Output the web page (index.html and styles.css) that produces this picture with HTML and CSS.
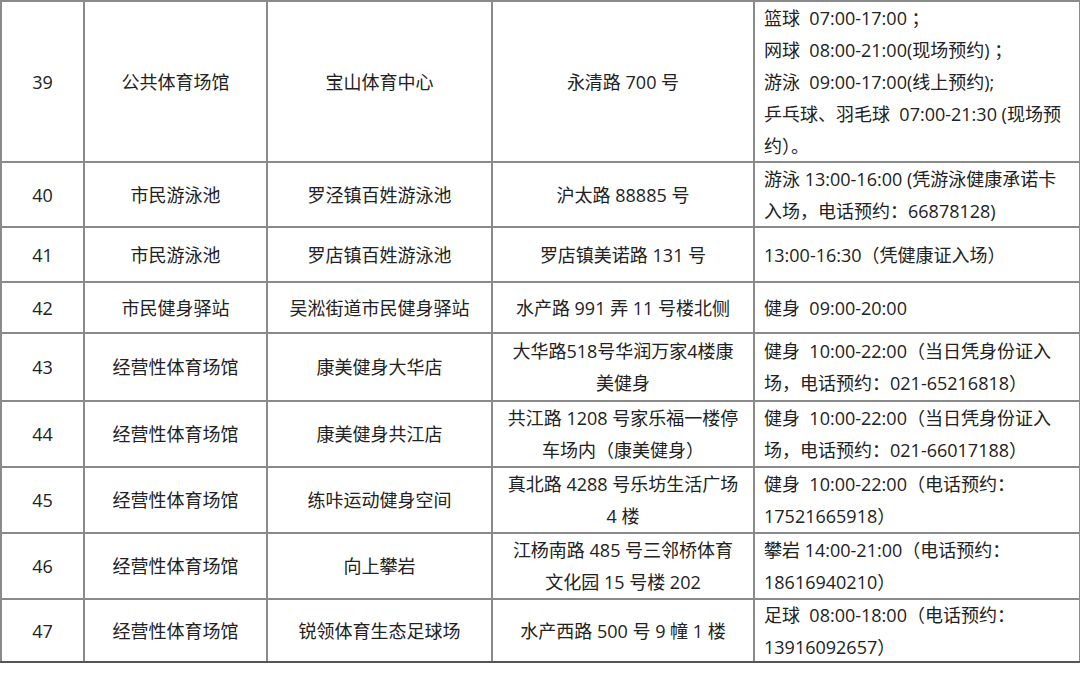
FILE: index.html
```html
<!DOCTYPE html>
<html lang="zh-CN">
<head>
<meta charset="utf-8">
<title>场馆开放信息</title>
<link rel="stylesheet" href="styles.css">
</head>
<body>
<table class="venues">
  <colgroup>
    <col class="c-no">
    <col class="c-type">
    <col class="c-name">
    <col class="c-addr">
    <col class="c-time">
  </colgroup>
  <tbody>
    <tr class="r-162">
      <td class="num">39</td>
      <td>公共体育场馆</td>
      <td>宝山体育中心</td>
      <td>永清路 700 号</td>
      <td class="time"><div class="fit">篮球&nbsp; 07:00-17:00 ；<br>网球&nbsp; 08:00-21:00(现场预约) ；<br>游泳&nbsp; 09:00-17:00(线上预约);<br>乒乓球、羽毛球&nbsp; 07:00-21:30 (现场预<br>约）。</div></td>
    </tr>
    <tr class="r-65">
      <td class="num">40</td>
      <td>市民游泳池</td>
      <td>罗泾镇百姓游泳池</td>
      <td>沪太路 88885 号</td>
      <td class="time"><div class="fit">游泳 13:00-16:00 (凭游泳健康承诺卡<br>入场，电话预约：66878128)</div></td>
    </tr>
    <tr class="r-55">
      <td class="num">41</td>
      <td>市民游泳池</td>
      <td>罗店镇百姓游泳池</td>
      <td>罗店镇美诺路 131 号</td>
      <td class="time">13:00-16:30（凭健康证入场）</td>
    </tr>
    <tr class="r-51">
      <td class="num">42</td>
      <td>市民健身驿站</td>
      <td>吴淞街道市民健身驿站</td>
      <td>水产路 991 弄 11 号楼北侧</td>
      <td class="time">健身&nbsp; 09:00-20:00</td>
    </tr>
    <tr class="r-68">
      <td class="num">43</td>
      <td>经营性体育场馆</td>
      <td>康美健身大华店</td>
      <td><div class="fit">大华路518号华润万家4楼康<br>美健身</div></td>
      <td class="time"><div class="fit">健身&nbsp; 10:00-22:00（当日凭身份证入<br>场，电话预约：021-65216818）</div></td>
    </tr>
    <tr class="r-66">
      <td class="num">44</td>
      <td>经营性体育场馆</td>
      <td>康美健身共江店</td>
      <td><div class="fit">共江路 1208 号家乐福一楼停<br>车场内（康美健身）</div></td>
      <td class="time"><div class="fit">健身&nbsp; 10:00-22:00（当日凭身份证入<br>场，电话预约：021-66017188）</div></td>
    </tr>
    <tr class="r-66">
      <td class="num">45</td>
      <td>经营性体育场馆</td>
      <td>练咔运动健身空间</td>
      <td><div class="fit">真北路 4288 号乐坊生活广场<br>4 楼</div></td>
      <td class="time"><div class="fit">健身&nbsp; 10:00-22:00（电话预约：<br>17521665918）</div></td>
    </tr>
    <tr class="r-66">
      <td class="num">46</td>
      <td>经营性体育场馆</td>
      <td>向上攀岩</td>
      <td><div class="fit">江杨南路 485 号三邻桥体育<br>文化园 15 号楼 202</div></td>
      <td class="time"><div class="fit">攀岩 14:00-21:00（电话预约：<br>18616940210）</div></td>
    </tr>
    <tr class="r-63 last">
      <td class="num">47</td>
      <td>经营性体育场馆</td>
      <td>锐领体育生态足球场</td>
      <td>水产西路 500 号 9 幢 1 楼</td>
      <td class="time"><div class="fit">足球&nbsp; 08:00-18:00（电话预约：<br>13916092657）</div></td>
    </tr>
  </tbody>
</table>
</body>
</html>
```

FILE: styles.css
```css
html, body {
  margin: 0;
  padding: 0;
  background: #ffffff;
}

body {
  font-family: "Open Sans", "Noto Sans CJK SC", "Noto Sans", sans-serif;
  font-size: 18px;
  color: #222222;
}

.venues {
  width: 1079px;
  table-layout: fixed;
  border-collapse: collapse;
}

.c-no { width: 83px; }
.c-type { width: 183px; }
.c-name { width: 225px; }
.c-addr { width: 262px; }
.c-time { width: 326px; }

.venues td {
  border: 2px solid #8a8a8a;
  padding: 0 2px;
  text-align: center;
  vertical-align: middle;
  line-height: 32px;
  white-space: nowrap;
  overflow: hidden;
}

.venues td.time {
  text-align: left;
  padding-left: 9px;
}

/* keeps the 32px line pitch while letting the row stay at its own height */
.fit {
  margin: -4px 0;
}

.venues tr.last td {
  border-bottom-color: #555555;
}

.r-162 { height: 161px; }
.r-65 { height: 65px; }
.r-55 { height: 55px; }
.r-51 { height: 51px; }
.r-68 { height: 68px; }
.r-66 { height: 66px; }
.r-63 { height: 63px; }
```
